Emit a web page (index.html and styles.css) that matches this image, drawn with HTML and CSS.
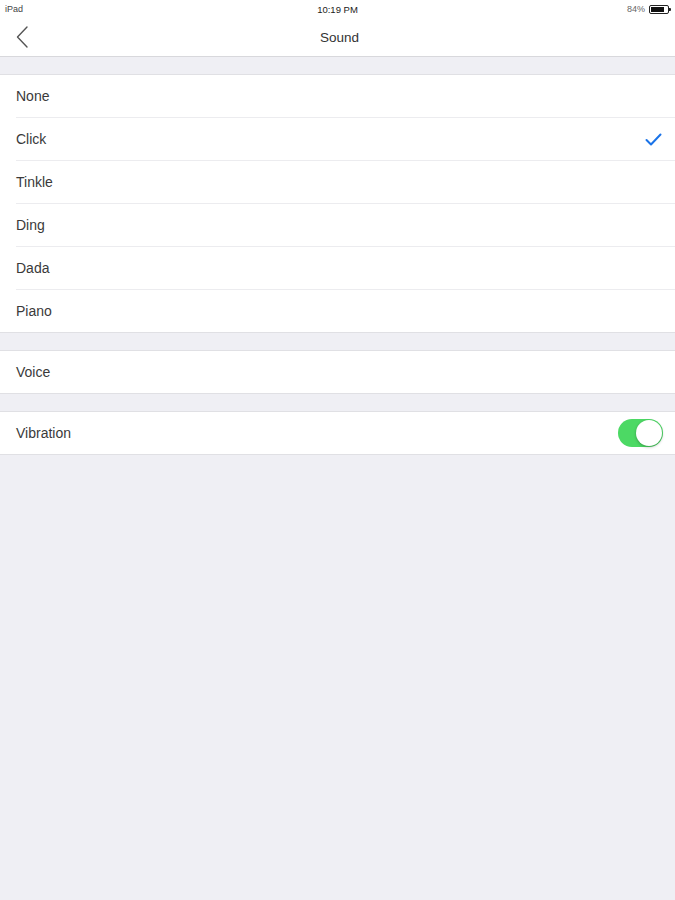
FILE: index.html
```html
<!DOCTYPE html>
<html lang="en">
<head>
    <meta charset="UTF-8">
    <meta name="viewport" content="width=device-width, initial-scale=1.0">
    <title>Sound</title>
    <link rel="stylesheet" href="styles.css">
</head>
<body>
    <!-- Status bar -->
    <div class="status-bar">
        <span class="status-left">iPad</span>
        <span class="status-time">10:19 PM</span>
        <span class="status-right">
            84%
            <span class="battery"><span class="battery-level"></span></span>
        </span>
    </div>

    <!-- Navigation -->
    <div class="nav-bar">
        <button class="back-btn" aria-label="Back">
            <svg width="12" height="22" viewBox="0 0 12 22">
                <path d="M11 1 L1.5 11 L11 21" fill="none" stroke="#555" stroke-width="1.4" stroke-linecap="round" stroke-linejoin="round"/>
            </svg>
        </button>
        <h1 class="nav-title">Sound</h1>
        <span class="nav-spacer"></span>
    </div>

    <div class="content">
        <div class="group">
            <div class="row"><span class="row-label">None</span></div>
            <div class="row">
                <span class="row-label">Click</span>
                <svg class="check" width="17" height="13" viewBox="0 0 17 13">
                    <path d="M1.5 7 L6 11.5 L15.5 1.5" fill="none" stroke="#1a73e8" stroke-width="2" stroke-linecap="round" stroke-linejoin="round"/>
                </svg>
            </div>
            <div class="row"><span class="row-label">Tinkle</span></div>
            <div class="row"><span class="row-label">Ding</span></div>
            <div class="row"><span class="row-label">Dada</span></div>
            <div class="row"><span class="row-label">Piano</span></div>
        </div>

        <div class="group">
            <div class="row"><span class="row-label">Voice</span></div>
        </div>

        <div class="group">
            <div class="row">
                <span class="row-label">Vibration</span>
                <span class="switch on"><span class="knob"></span></span>
            </div>
        </div>
    </div>
</body>
</html>
```

FILE: styles.css
```css
* {
    box-sizing: border-box;
    margin: 0;
    padding: 0;
    font-family: "Liberation Sans", Arial, sans-serif;
}

body {
    background-color: #efeff4;
    color: #3a3a3a;
}

/* Status bar */
.status-bar {
    height: 18px;
    background: white;
    display: flex;
    align-items: center;
    justify-content: space-between;
    padding: 0 4px 0 5px;
    font-size: 9px;
    color: #444;
    position: relative;
}

.status-time {
    position: absolute;
    left: 0;
    right: 0;
    text-align: center;
    font-size: 9.5px;
    color: #222;
}

.status-left,
.status-right {
    position: relative;
    z-index: 1;
}

.status-right {
    display: flex;
    align-items: center;
    gap: 4px;
    color: #666;
}

.battery {
    width: 20px;
    height: 9px;
    border: 1px solid #222;
    border-radius: 2px;
    padding: 1px;
    position: relative;
    margin-right: 2px;
}

.battery::after {
    content: "";
    position: absolute;
    right: -3px;
    top: 2px;
    width: 2px;
    height: 3px;
    background: #222;
    border-radius: 0 1px 1px 0;
}

.battery-level {
    display: block;
    width: 84%;
    height: 100%;
    background: #111;
}

/* Navigation */
.nav-bar {
    height: 39px;
    background: white;
    border-bottom: 1px solid #d8d8dc;
    display: flex;
    align-items: center;
    justify-content: space-between;
    padding: 0 12px 0 16px;
}

.back-btn {
    background: none;
    border: none;
    width: 30px;
    height: 30px;
    display: flex;
    align-items: center;
    cursor: pointer;
}

.nav-title {
    font-size: 13.5px;
    font-weight: normal;
    color: #333;
}

.nav-spacer {
    width: 30px;
}

/* List groups */
.content {
    padding-top: 17px;
}

.group {
    background: white;
    border-top: 1px solid #e0e0e4;
    border-bottom: 1px solid #e0e0e4;
    margin-bottom: 17px;
}

.row {
    height: 43px;
    margin-left: 16px;
    padding-right: 12px;
    display: flex;
    align-items: center;
    justify-content: space-between;
    border-bottom: 1px solid #ececef;
}

.row:last-child {
    border-bottom: none;
    height: 42px;
}

.row-label {
    font-size: 14px;
    color: #3a3a3a;
}

.check {
    margin-right: 1px;
}

/* Switch */
.switch {
    width: 45px;
    height: 28px;
    border-radius: 14px;
    background: #e5e5ea;
    position: relative;
}

.switch.on {
    background: #4cd964;
}

.knob {
    position: absolute;
    top: 1px;
    right: 1px;
    width: 26px;
    height: 26px;
    border-radius: 50%;
    background: white;
    box-shadow: 0 1px 3px rgba(0, 0, 0, 0.3);
}
```
